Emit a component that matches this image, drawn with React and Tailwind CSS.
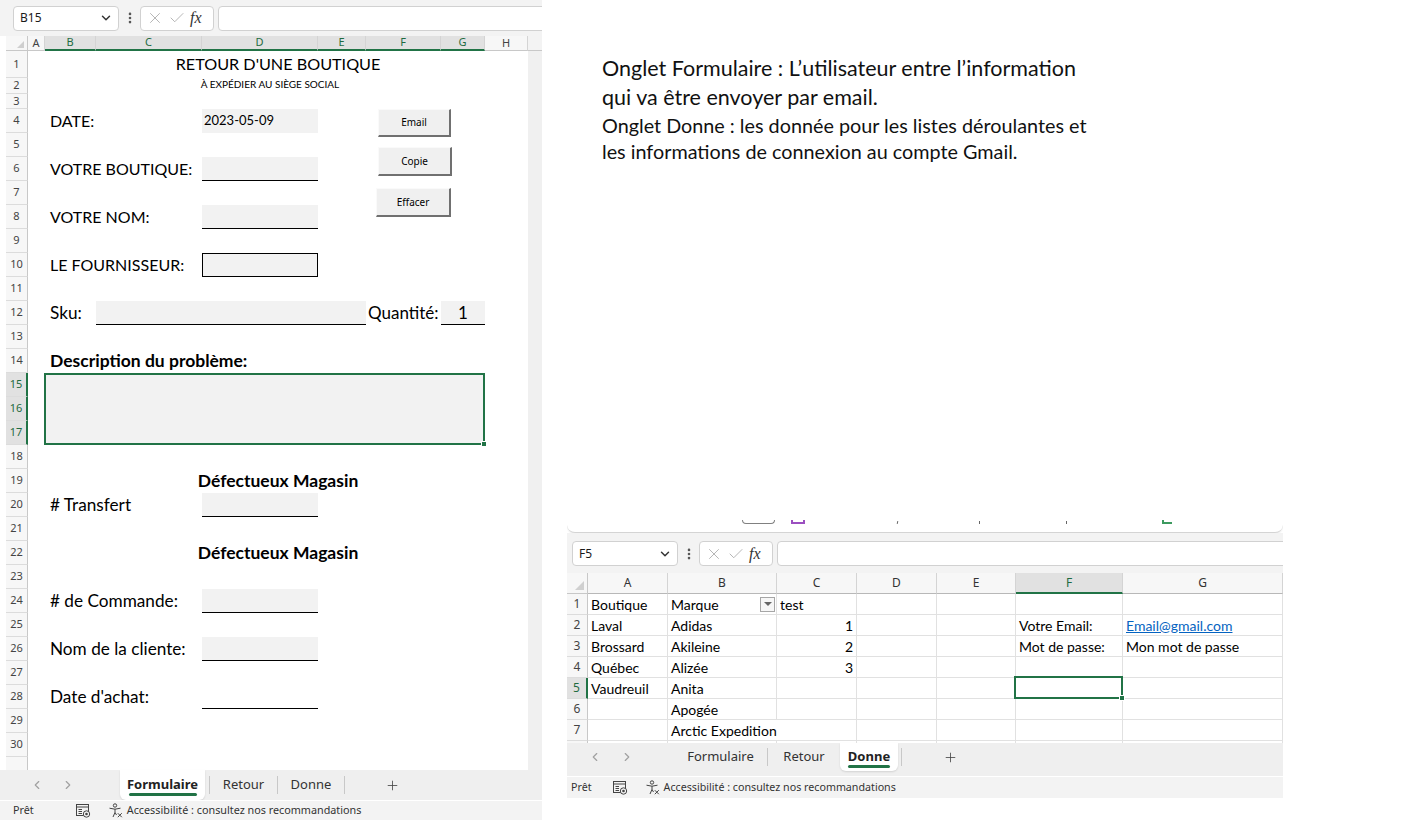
import React from "react";
import { ChevronDown, ChevronLeft, ChevronRight, Check, X, Plus, EllipsisVertical } from "lucide-react";

const ui = "font-['Noto_Sans',sans-serif]";
const cal = "font-['Lato',sans-serif]";

function FormulaBar({ cell }) {
  return (
    <div className={`flex h-[25px] items-stretch ${ui}`}>
      <div className="flex w-[106px] shrink-0 items-center justify-between rounded-[4px] border border-[#d1d1d1] bg-white pl-[6px] pr-[5px]">
        <span className="text-[12px] text-[#1a1a1a]">{cell}</span>
        <ChevronDown size={14} strokeWidth={2.5} className="text-[#333]" />
      </div>
      <div className="flex w-[21px] shrink-0 items-center justify-center">
        <EllipsisVertical size={14} strokeWidth={2.5} className="text-[#555]" />
      </div>
      <div className="flex w-[74px] shrink-0 items-center gap-[4px] rounded-[4px] border border-[#d1d1d1] bg-white pl-[5px]">
        <X size={18} strokeWidth={1.1} className="text-[#a6a6a6]" />
        <Check size={18} strokeWidth={1.1} className="text-[#a6a6a6]" />
        <span className="font-['Liberation_Serif',serif] text-[16px] italic text-[#333]">fx</span>
      </div>
      <div className="ml-[4px] w-[600px] shrink-0 rounded-[4px] border border-[#d1d1d1] bg-white" />
    </div>
  );
}

function ViewIcon() {
  return (
    <svg width="15" height="14" viewBox="0 0 15 14" fill="none" stroke="#444" strokeWidth="1">
      <rect x="0.5" y="0.5" width="12" height="11" />
      <line x1="0.5" y1="3" x2="12.5" y2="3" />
      <line x1="2.5" y1="5.5" x2="6" y2="5.5" />
      <line x1="2.5" y1="7.5" x2="6" y2="7.5" />
      <line x1="2.5" y1="9.5" x2="6" y2="9.5" />
      <circle cx="10.5" cy="10" r="3.2" fill="#f3f3f3" />
      <circle cx="10.5" cy="10" r="1.3" fill="#444" stroke="none" />
    </svg>
  );
}

function AccIcon() {
  return (
    <svg width="15" height="15" viewBox="0 0 15 15" fill="none" stroke="#444" strokeWidth="1">
      <circle cx="7" cy="2.5" r="1.7" />
      <path d="M1.5 5.2 L7 6.2 L12.5 5.2" />
      <path d="M7 6.2 V9.5 M5 14 L7 9.5 L8.5 12" />
      <path d="M9.8 10.2 L13.8 14.2 M13.8 10.2 L9.8 14.2" />
    </svg>
  );
}

const leftCols = [
  { k: "A", w: "w-[17px]" },
  { k: "B", w: "w-[51px]", sel: true },
  { k: "C", w: "w-[106px]", sel: true },
  { k: "D", w: "w-[116px]", sel: true },
  { k: "E", w: "w-[48px]", sel: true },
  { k: "F", w: "w-[75px]", sel: true },
  { k: "G", w: "w-[44px]", sel: true },
  { k: "H", w: "w-[43px]" },
];

const leftRows = Array.from({ length: 31 }, (_, i) => i + 1);
const leftRowH = (n) => (n === 1 ? "h-[27px]" : n === 2 ? "h-[16px]" : n === 3 ? "h-[15px]" : "h-[24px]");

// uppercase labels run a bit smaller than the mixed-case ones
const label = "col-span-2 col-start-2 flex items-center whitespace-nowrap pl-[5px] text-[16px]";
const labelMixed = "col-span-2 col-start-2 flex items-center whitespace-nowrap pl-[5px] text-[17.2px]";
const box = "col-start-4 bg-[#f2f2f2] border-b border-black";
const btn = `flex items-center justify-center border border-t-[#fafafa] border-l-[#fafafa] border-r-2 border-b-2 border-r-[#707070] border-b-[#707070] bg-[#f0f0f0] text-[10px] text-black ${ui}`;

function LeftSheet() {
  return (
    <div className="flex h-full w-[542px] shrink-0 flex-col overflow-hidden bg-white">
      {/* formula bar */}
      <div className="flex h-[36px] shrink-0 items-center bg-[#f3f3f3] pl-[13px]">
        <FormulaBar cell="B15" />
      </div>

      {/* column headers */}
      <div className={`flex h-[15px] shrink-0 ${ui}`}>
        <div className="w-[6px] shrink-0 bg-white" />
        <div className="relative w-[22px] shrink-0 border-r border-b border-[#c8c8c8] bg-[#f7f7f7]">
          <div className="absolute bottom-[2px] right-[3px] h-0 w-0 border-l-[7px] border-l-transparent [border-bottom:7px_solid_#cfcfcf]" />
        </div>
        {leftCols.map((c) => (
          <div
            key={c.k}
            className={`flex shrink-0 items-center justify-center border-r border-r-[#d4d4d4] text-[11px] ${c.w} ${
              c.sel ? "border-b-2 border-b-[#217346] bg-[#e1e1e1] text-[#1f6b41]" : "border-b border-b-[#c8c8c8] bg-[#f7f7f7] text-[#444]"
            }`}
          >
            {c.k}
          </div>
        ))}
        <div className="flex-1 border-b border-[#c8c8c8] bg-[#f3f3f3]" />
      </div>

      {/* body */}
      <div className="flex h-[719px] shrink-0 overflow-hidden">
        <div className="w-[6px] shrink-0 bg-white" />
        <div className={`flex w-[22px] shrink-0 flex-col ${ui}`}>
          {leftRows.map((n) => {
            const sel = n >= 15 && n <= 17;
            return (
              <div
                key={n}
                className={`flex shrink-0 items-center justify-center border-b border-b-[#dcdcdc] text-[11px] ${leftRowH(n)} ${
                  sel ? "border-r-2 border-r-[#217346] bg-[#e1e1e1] text-[#1f6b41]" : "border-r border-r-[#c8c8c8] bg-[#f7f7f7] text-[#444]"
                }`}
              >
                {n < 31 ? n : ""}
              </div>
            );
          })}
        </div>

        <div className={`grid w-[500px] shrink-0 grid-cols-[17px_51px_106px_116px_48px_75px_44px_43px] grid-rows-[27px_16px_15px_repeat(28,24px)] ${cal} text-black`}>
          <div className="col-span-6 col-start-2 row-start-1 flex items-center justify-center whitespace-nowrap pl-[26px] text-[16.2px]">
            RETOUR D'UNE BOUTIQUE
          </div>
          <div className="col-span-6 col-start-2 row-start-2 flex items-start justify-center whitespace-nowrap pl-[10px] pt-[1px] text-[10px] leading-none">
            À EXPÉDIER AU SIÈGE SOCIAL
          </div>

          <div className={`${label} row-start-4`}>DATE:</div>
          <div className="col-start-4 row-start-4 flex items-end bg-[#f2f2f2] pb-[3px] pl-[2px] text-[13px]">2023-05-09</div>

          <div className="col-span-2 col-start-6 row-span-5 row-start-4 flex flex-col">
            <div className={`${btn} ml-[12px] h-[28px] w-[73px]`}>Email</div>
            <div className={`${btn} ml-[12px] mt-[10px] h-[29px] w-[74px]`}>Copie</div>
            <div className={`${btn} ml-[10px] mt-[12px] h-[29px] w-[75px]`}>Effacer</div>
          </div>

          <div className={`${label} row-start-6`}>VOTRE BOUTIQUE:</div>
          <div className={`${box} row-start-6`} />

          <div className={`${label} row-start-8`}>VOTRE NOM:</div>
          <div className={`${box} row-start-8`} />

          <div className={`${label} row-start-10`}>LE FOURNISSEUR:</div>
          <div className="col-start-4 row-start-10 border border-black bg-[#f2f2f2]" />

          <div className="col-start-2 row-start-12 flex items-center whitespace-nowrap pl-[5px] text-[17.2px]">Sku:</div>
          <div className="col-span-3 col-start-3 row-start-12 border-b border-black bg-[#f2f2f2]" />
          <div className="col-start-6 row-start-12 flex items-center whitespace-nowrap pl-[2px] text-[17px]">Quantité:</div>
          <div className="col-start-7 row-start-12 flex items-center justify-center border-b border-black bg-[#f2f2f2] text-[17px]">1</div>

          <div className="col-span-5 col-start-2 row-start-14 flex items-center whitespace-nowrap pl-[5px] text-[17.5px] font-bold">
            Description du problème:
          </div>
          <div className="relative col-span-6 col-start-2 row-span-3 row-start-15 -ml-[1px] border-2 border-[#217346] bg-[#f2f2f2]">
            <div className="absolute -bottom-[4px] -right-[4px] h-[6px] w-[6px] border border-white bg-[#217346]" />
          </div>

          <div className="col-span-6 col-start-2 row-start-19 flex items-center justify-center whitespace-nowrap pl-[26px] text-[17.5px] font-bold">
            Défectueux Magasin
          </div>
          <div className={`${labelMixed} row-start-20`}># Transfert</div>
          <div className={`${box} row-start-20`} />

          <div className="col-span-6 col-start-2 row-start-22 flex items-center justify-center whitespace-nowrap pl-[26px] text-[17.5px] font-bold">
            Défectueux Magasin
          </div>
          <div className={`${labelMixed} row-start-24`}># de Commande:</div>
          <div className={`${box} row-start-24`} />

          <div className={`${labelMixed} row-start-26`}>Nom de la cliente:</div>
          <div className={`${box} row-start-26`} />

          <div className={`${labelMixed} row-start-28`}>Date d'achat:</div>
          <div className="col-start-4 row-start-28 border-b border-black" />
        </div>

        <div className="flex-1 bg-[#f0f0f0]" />
      </div>

      {/* sheet tabs */}
      <div className={`flex h-[30px] shrink-0 items-stretch bg-[#efefef] ${ui}`}>
        <div className="flex items-center gap-[17px] pl-[30px] text-[#a0a0a0]">
          <ChevronLeft size={14} />
          <ChevronRight size={14} />
        </div>
        <div className="ml-[45px] flex w-[85px] flex-col items-center justify-center rounded-b-[6px] bg-white pt-[1px] shadow-[0_1px_2px_rgba(0,0,0,0.12)]">
          <span className="text-[13px] font-bold leading-[18px] text-[#222]">Formulaire</span>
          <div className="h-[3px] w-[68px] rounded-full bg-[#217346]" />
        </div>
        <div className="my-auto ml-[4px] h-[18px] w-[1px] bg-[#c8c8c8]" />
        <div className="flex w-[67px] items-center justify-center text-[13px] text-[#333]">Retour</div>
        <div className="my-auto h-[18px] w-[1px] bg-[#c8c8c8]" />
        <div className="flex w-[66px] items-center justify-center text-[13px] text-[#333]">Donne</div>
        <div className="my-auto h-[18px] w-[1px] bg-[#c8c8c8]" />
        <div className="ml-[40px] flex items-center text-[#444]">
          <Plus size={15} strokeWidth={1.3} />
        </div>
      </div>

      {/* status bar */}
      <div className={`flex h-[20px] shrink-0 items-center border-t border-white bg-[#f3f3f3] text-[10.8px] text-[#333] ${ui}`}>
        <span className="ml-[13px]">Prêt</span>
        <div className="ml-[42px] flex items-center">
          <ViewIcon />
        </div>
        <div className="ml-[17px] flex items-center">
          <AccIcon />
        </div>
        <span className="ml-[4px] whitespace-nowrap">Accessibilité : consultez nos recommandations</span>
      </div>
    </div>
  );
}

const rightCols = [
  { k: "A", w: "w-[80px]" },
  { k: "B", w: "w-[109px]" },
  { k: "C", w: "w-[80px]" },
  { k: "D", w: "w-[80px]" },
  { k: "E", w: "w-[79px]" },
  { k: "F", w: "w-[107px]", sel: true },
  { k: "G", w: "w-[160px]" },
];

const rightData = [
  ["Boutique", "Marque", "test", "", "", "", ""],
  ["Laval", "Adidas", 1, "", "", "Votre Email:", "Email@gmail.com"],
  ["Brossard", "Akileine", 2, "", "", "Mot de passe:", "Mon mot de passe"],
  ["Québec", "Alizée", 3, "", "", "", ""],
  ["Vaudreuil", "Anita", "", "", "", "", ""],
  ["", "Apogée", "", "", "", "", ""],
  ["", "Arctic Expedition", "", "", "", "", ""],
  ["", "", "", "", "", "", ""],
];

function RightCell({ value, col, r, c }) {
  const overflow = r === 7 && c === 1;
  const selected = r === 5 && c === 5;
  const isNum = typeof value === "number";
  let cls = "overflow-hidden border-r";
  if (overflow) cls = "z-10 overflow-visible";
  if (selected) cls = "z-20 overflow-visible border-r";
  return (
    <div
      className={`relative flex h-full shrink-0 items-center border-b border-[#e1e1e1] ${col.w} ${cls} ${
        isNum ? "justify-end pr-[3px]" : "pl-[3px]"
      }`}
    >
      {r === 2 && c === 6 ? (
        <span className="whitespace-nowrap text-[#0563c1] underline">{value}</span>
      ) : (
        <span className="whitespace-nowrap">{value}</span>
      )}
      {r === 1 && c === 1 && (
        <div className="ml-auto mr-[1px] flex h-[15px] w-[15px] items-center justify-center border border-[#a6a6a6] bg-[#f7f7f7]">
          <div className="h-0 w-0 border-x-[4px] border-t-[4px] border-x-transparent border-t-[#666]" />
        </div>
      )}
      {selected && (
        <div className="absolute -bottom-[1px] -left-[2px] -right-[1px] -top-[2px] border-2 border-[#217346]">
          <div className="absolute -bottom-[4px] -right-[4px] h-[6px] w-[6px] border border-white bg-[#217346]" />
        </div>
      )}
    </div>
  );
}

function RightSheet() {
  return (
    <div className="ml-[25px] flex h-[278px] w-[716px] shrink-0 flex-col overflow-hidden">
      {/* cut-off ribbon */}
      <div className="flex h-[13px] shrink-0 items-start rounded-b-[8px] border-b border-[#d4d4d4] bg-white shadow-[0_1px_2px_rgba(0,0,0,0.08)]">
        <div className="ml-[175px] h-[4px] w-[33px] rounded-b-[4px] border-x border-b border-[#808080]" />
        <div className="ml-[16px] h-[4px] w-[14px] border-x-2 border-b-2 border-[#9b4fc0]" />
        <div className="ml-[92px] mt-[1px] h-[3px] w-[1px] rotate-12 bg-[#666]" />
        <div className="ml-[81px] mt-[1px] h-[3px] w-[1px] bg-[#666]" />
        <div className="ml-[86px] mt-[1px] h-[3px] w-[1px] bg-[#666]" />
        <div className="ml-[95px] h-[4px] w-[10px] border-b-2 border-l-2 border-[#3c9a5f]" />
      </div>
      {/* formula bar */}
      <div className="flex h-[40px] shrink-0 items-start bg-[#f3f3f3] pl-[5px] pt-[8px]">
        <FormulaBar cell="F5" />
      </div>
      {/* column headers */}
      <div className={`flex h-[21px] shrink-0 ${ui}`}>
        <div className="relative w-[21px] shrink-0 border-r border-b border-[#c8c8c8] bg-[#f7f7f7]">
          <div className="absolute bottom-[3px] right-[3px] h-0 w-0 border-l-[9px] border-l-transparent [border-bottom:9px_solid_#d0d0d0]" />
        </div>
        {rightCols.map((c) => (
          <div
            key={c.k}
            className={`flex shrink-0 items-center justify-center border-r border-r-[#d4d4d4] text-[12px] ${c.w} ${
              c.sel ? "border-b-2 border-b-[#217346] bg-[#e1e1e1] text-[#1f6b41]" : "border-b border-b-[#b8b8b8] bg-[#f7f7f7] text-[#333]"
            }`}
          >
            {c.k}
          </div>
        ))}
      </div>
      {/* rows */}
      <div className={`flex h-[149px] shrink-0 flex-col overflow-hidden bg-white text-[14px] text-black ${cal}`}>
        {rightData.map((row, i) => {
          const r = i + 1;
          const sel = r === 5;
          return (
            <div key={r} className="flex h-[21px] shrink-0">
              <div
                className={`flex w-[21px] shrink-0 items-center justify-center border-b border-b-[#dcdcdc] text-[12px] ${ui} ${
                  sel ? "border-r-2 border-r-[#217346] bg-[#e1e1e1] text-[#1f6b41]" : "border-r border-r-[#c8c8c8] bg-[#f7f7f7] text-[#444]"
                }`}
              >
                {r < 8 ? r : ""}
              </div>
              {row.map((v, c) => (
                <RightCell key={c} value={v} col={rightCols[c]} r={r} c={c} />
              ))}
            </div>
          );
        })}
      </div>
      {/* tabs */}
      <div className={`flex h-[33px] shrink-0 items-start bg-[#efefef] ${ui}`}>
        <div className="flex h-[28px] items-center gap-[18px] pl-[21px] text-[#a0a0a0]">
          <ChevronLeft size={14} />
          <ChevronRight size={14} />
        </div>
        <div className="ml-[40px] flex h-[28px] w-[93px] items-center justify-center text-[13px] text-[#333]">Formulaire</div>
        <div className="mt-[5px] h-[18px] w-[1px] bg-[#c8c8c8]" />
        <div className="flex h-[28px] w-[72px] items-center justify-center text-[13px] text-[#333]">Retour</div>
        <div className="flex h-[28px] w-[58px] flex-col items-center justify-center rounded-b-[6px] bg-white shadow-[0_1px_2px_rgba(0,0,0,0.12)]">
          <span className="text-[13px] font-bold leading-[18px] text-[#222]">Donne</span>
          <div className="h-[3px] w-[42px] rounded-full bg-[#217346]" />
        </div>
        <div className="ml-[3px] mt-[5px] h-[18px] w-[1px] bg-[#c8c8c8]" />
        <div className="ml-[41px] flex h-[28px] items-center text-[#444]">
          <Plus size={15} strokeWidth={1.3} />
        </div>
      </div>
      {/* status */}
      <div className={`flex h-[22px] shrink-0 items-center border-t border-white bg-[#f3f3f3] text-[10.7px] text-[#333] ${ui}`}>
        <span className="ml-[4px]">Prêt</span>
        <div className="ml-[21px] flex items-center">
          <ViewIcon />
        </div>
        <div className="ml-[17px] flex items-center">
          <AccIcon />
        </div>
        <span className="ml-[4px] whitespace-nowrap">Accessibilité : consultez nos recommandations</span>
      </div>
    </div>
  );
}

export default function App() {
  return (
    <div className="flex h-[820px] w-[1416px] overflow-hidden bg-white">
      <LeftSheet />
      <div className="flex flex-1 flex-col">
        <div className={`h-[520px] shrink-0 pl-[60px] pt-[54px] text-[#111] ${cal}`}>
          <p className="whitespace-nowrap text-[21.5px] leading-[29px]">
            Onglet Formulaire : L’utilisateur entre l’information
            <br />
            qui va être envoyer par email.
          </p>
          <p className="whitespace-nowrap text-[19.8px] leading-[26px]">
            Onglet Donne : les donnée pour les listes déroulantes et
            <br />
            les informations de connexion au compte Gmail.
          </p>
        </div>
        <RightSheet />
      </div>
    </div>
  );
}
